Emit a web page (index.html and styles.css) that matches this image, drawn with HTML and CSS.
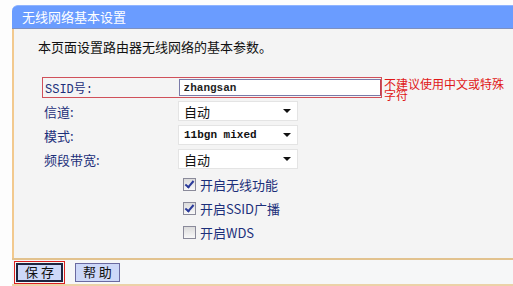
FILE: index.html
```html
<!DOCTYPE html>
<html lang="zh-CN">
<head>
    <meta charset="UTF-8">
    <title>无线网络基本设置</title>
    <link rel="stylesheet" href="styles.css">
</head>
<body>
    <div class="panel">
        <div class="panel-title">无线网络基本设置</div>
        <div class="panel-body">
            <p class="intro">本页面设置路由器无线网络的基本参数。</p>

            <div class="form">
                <div class="row row-ssid">
                    <div class="ssid-box">
                        <label class="label">SSID号:</label>
                        <input class="text-input" type="text" value="zhangsan">
                    </div>
                    <span class="hint">不建议使用中文或特殊字符</span>
                </div>
                <div class="row">
                    <label class="label">信道:</label>
                    <div class="select"><span>自动</span><i class="caret"></i></div>
                </div>
                <div class="row">
                    <label class="label">模式:</label>
                    <div class="select mono"><span>11bgn mixed</span><i class="caret"></i></div>
                </div>
                <div class="row">
                    <label class="label">频段带宽:</label>
                    <div class="select"><span>自动</span><i class="caret"></i></div>
                </div>
                <div class="checks">
                    <label class="check"><span class="box checked"></span>开启无线功能</label>
                    <label class="check"><span class="box checked"></span>开启SSID广播</label>
                    <label class="check"><span class="box"></span>开启WDS</label>
                </div>
            </div>
        </div>
        <div class="panel-foot">
            <span class="mark"><button class="btn btn-active">保 存</button></span>
            <button class="btn">帮 助</button>
        </div>
    </div>
</body>
</html>
```

FILE: styles.css
```css
body {
    margin: 0;
    background-color: #fdfdfd;
    font-family: "Noto Sans CJK SC", "DejaVu Sans", sans-serif;
    font-size: 12px;
    color: #222;
}
.panel {
    margin: 5px 0 0 12px;
}
.panel-title {
    height: 22px;
    line-height: 22px;
    padding-left: 10px;
    background-color: #6a9cff;
    border-top: 1px solid #8fb4ff;
    border-bottom: 1px solid #7d90c0;
    border-top-left-radius: 6px;
    color: #fff;
    font-size: 13px;
}
.panel-body {
    background-color: #f4f4f4;
    border-left: 2px solid #f2c98e;
    padding: 8px 0 10px 24px;
    height: 229px;
    box-sizing: border-box;
}
.intro {
    margin: 0 0 20px 0;
    font-size: 13px;
    line-height: 20px;
    color: #111;
}
.row {
    display: flex;
    align-items: center;
    height: 24px;
    margin-left: 6px;
}
.label {
    width: 134px;
    color: #1c2f7a;
    font-size: 13px;
}
.row-ssid {
    margin-left: 4px;
    align-items: flex-start;
    height: 22px;
}
.ssid-box {
    display: flex;
    align-items: center;
    width: 338px;
    height: 19px;
    border: 1px solid #d0505a;
}
.ssid-box .label {
    width: 134px;
    padding-left: 2px;
    font-family: "Liberation Mono", "Noto Sans CJK SC", monospace;
    font-size: 12px;
}
.text-input {
    width: 203px;
    height: 17px;
    box-sizing: border-box;
    border: 1px solid #7a7aa8;
    border-right-color: #c04050;
    background: #fff;
    padding: 0 4px;
    font-family: "Liberation Mono", monospace;
    font-size: 11px;
    font-weight: bold;
    color: #222;
}
.hint {
    width: 126px;
    margin-left: 2px;
    color: #e01818;
    font-size: 12px;
    line-height: 11px;
    padding-top: 1px;
}
.select {
    display: flex;
    align-items: center;
    justify-content: space-between;
    width: 120px;
    height: 20px;
    box-sizing: border-box;
    background: #fff;
    border: 1px solid #e4e4e4;
    padding: 0 4px 0 5px;
    font-size: 13px;
    color: #111;
}
.select.mono span {
    font-family: "Liberation Mono", monospace;
    font-size: 11px;
    font-weight: bold;
}
.caret {
    width: 0;
    height: 0;
    border-left: 4px solid transparent;
    border-right: 4px solid transparent;
    border-top: 4px solid #111;
    margin-right: 2px;
}
.checks {
    margin: 1px 0 0 145px;
}
.check {
    display: flex;
    align-items: center;
    height: 24px;
    color: #1c2f7a;
    font-size: 13px;
}
.box {
    width: 11px;
    height: 11px;
    margin-right: 4px;
    border: 1px solid #8a8a9a;
    background: linear-gradient(#dcdcdc, #f8f8f8);
    position: relative;
}
.box.checked::after {
    content: "";
    position: absolute;
    left: 3px;
    top: 0;
    width: 3px;
    height: 7px;
    border: solid #2a3a9a;
    border-width: 0 2px 2px 0;
    transform: rotate(40deg);
}
.panel-foot {
    display: flex;
    align-items: center;
    gap: 10px;
    height: 24px;
    padding-left: 2px;
    background-color: #f6f7f8;
    border-top: 2px solid #e2c28e;
    border-bottom: 2px solid #ecd2a8;
}
.mark {
    display: inline-flex;
    padding: 1px;
    border: 1px solid #d82020;
}
.btn {
    height: 19px;
    padding: 0 7px;
    background-color: #cdd8f8;
    border: 1px solid #6a6aa0;
    font-family: "Noto Sans CJK SC", sans-serif;
    font-size: 13px;
    line-height: 14px;
    color: #111;
    margin: 0;
}
.btn-active {
    border: 2px solid #1c2440;
}
```
